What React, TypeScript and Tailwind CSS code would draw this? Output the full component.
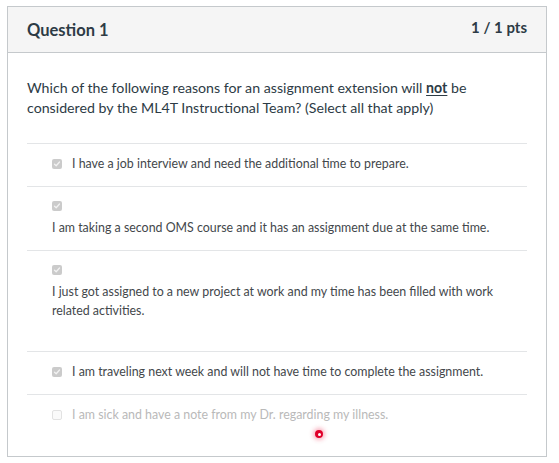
import React from 'react';

type Answer = {
    text: string;
    checked: boolean;
    stacked?: boolean;
    faded?: boolean;
    extra?: boolean;
};

const answers: Answer[] = [
    { text: "I have a job interview and need the additional time to prepare.", checked: true },
    { text: "I am taking a second OMS course and it has an assignment due at the same time.", checked: true, stacked: true },
    { text: "I just got assigned to a new project at work and my time has been filled with work related activities.", checked: true, stacked: true, extra: true },
    { text: "I am traveling next week and will not have time to complete the assignment.", checked: true },
    { text: "I am sick and have a note from my Dr. regarding my illness.", checked: false, faded: true },
];

const Box = ({ checked }: { checked: boolean }) => (
    <span
        className={
            checked
                ? "flex w-[10px] h-[10px] shrink-0 rounded-[2px] bg-[#cbcbcb] items-center justify-center"
                : "flex w-[10px] h-[10px] shrink-0 rounded-[2px] border border-[#e2e2e2] bg-[#fafafa]"
        }
    >
        {checked && (
            <svg width="8" height="8" viewBox="0 0 8 8" fill="none">
                <path d="M1.5 4.2 L3.2 5.8 L6.5 2" stroke="#f2f2f2" strokeWidth="1.3" strokeLinecap="round" strokeLinejoin="round" />
            </svg>
        )}
    </span>
);

const AnswerRow = ({ a }: { a: Answer }) => {
    const color = a.faded ? "text-[#b9b9b9]" : "text-[#43474b]";
    return (
        <div className="border-t border-[#e3e5e7] pl-[25px]">
            {a.stacked ? (
                <div className={`pt-[14px] ${a.extra ? "pb-[31px]" : "pb-[13px]"}`}>
                    <Box checked={a.checked} />
                    <p className={`mt-[7px] text-[12.4px] leading-[19px] ${color}`}>{a.text}</p>
                </div>
            ) : (
                <div className="flex items-center gap-[10px] pt-[10px] pb-[12px]">
                    <Box checked={a.checked} />
                    <span className={`text-[12.4px] leading-[20px] ${color}`}>{a.text}</span>
                </div>
            )}
        </div>
    );
};

export default function App() {
    return (
        <div className="relative w-[559px] h-[463px] bg-white" style={{ fontFamily: "Lato, 'Open Sans', sans-serif" }}>
            <div className="ml-[7px] pt-[6px]">
                <div className="w-[540px] h-[451px] border border-[#c5c9cc] bg-white">
                    {/* header */}
                    <div className="h-[46px] bg-[#f5f5f5] border-b border-[#c5c9cc] px-[19px] flex items-start justify-between">
                        <span className="pt-[11px] text-[16.5px] font-bold text-[#2d3b45]">Question 1</span>
                        <span className="pt-[9px] text-[15px] font-bold text-[#2d3b45]">1 / 1 pts</span>
                    </div>

                    <div className="px-[19px]">
                        <p className="pt-[25px] text-[14.2px] leading-[20px] text-[#2d3b45]">
                            Which of the following reasons for an assignment extension will <span className="font-bold underline underline-offset-2">not</span> be considered by the ML4T Instructional Team? (Select all that apply)
                        </p>

                        <div className="mt-[25px]">
                            {answers.map((a, i) => (
                                <AnswerRow key={i} a={a} />
                            ))}
                        </div>
                    </div>
                </div>
            </div>

            {/* cursor marker */}
            <div className="absolute left-[315px] top-[430px] w-[8px] h-[8px] rounded-full bg-[#e0002a] border-2 border-[#e0002a] shadow-[0_0_4px_2px_rgba(240,80,110,0.45)] flex items-center justify-center">
                <div className="w-[3px] h-[3px] rounded-full bg-white" />
            </div>
        </div>
    );
}
